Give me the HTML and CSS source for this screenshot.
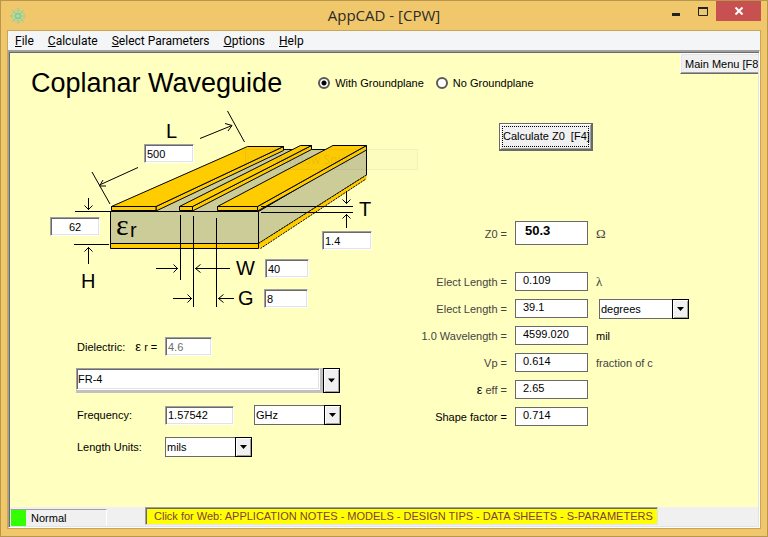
FILE: index.html
```html
<!DOCTYPE html>
<html lang="en">
<head>
<meta charset="utf-8">
<title>AppCAD - [CPW]</title>
<link rel="stylesheet" href="styles.css">
</head>
<body>
<div class="window">
  <header class="titlebar">
    <svg class="logo" width="18" height="18" viewBox="0 0 18 18" aria-hidden="true">
      <g fill="none" stroke="#3fe0cc" stroke-width="1">
        <circle cx="9" cy="9" r="2.5" stroke-width="1.4"/>
        <path d="M9 1v4M9 13v4M1 9h4M13 9h4" stroke-dasharray="1.6 .5"/>
        <path d="M3.5 3.5l3 3M11.500 11.500l3 3M14.500 3.500l-3 3M6.500 11.500l-3 3"/>
        <path d="M6 2l1.200 3M12 2l-1.200 3M6 16l1.200-3M12 16l-1.200-3M2 6l3 1.200M16 6l-3 1.200M2 12l3-1.200M16 12l-3-1.200" stroke-opacity=".35"/>
      </g>
    </svg>
    <div class="title">AppCAD - [CPW]</div>
    <div class="controls">
      <button class="control" aria-label="Minimize"><svg width="10" height="10" viewBox="0 0 10 10"><path d="M1 8.500h8" stroke="#222" stroke-width="3"/></svg></button>
      <button class="control" aria-label="Maximize"><svg width="10" height="10" viewBox="0 0 10 10"><path d="M0 2h10" stroke="#222" stroke-width="2"/><path d="M.5 1v8.500h9V1" fill="none" stroke="#222"/></svg></button>
      <button class="control close" aria-label="Close"><svg width="8" height="8" viewBox="0 0 8 8"><path d="M.5 .5l7 7M7.500 .5l-7 7" stroke="#fff" stroke-width="2"/></svg></button>
    </div>
  </header>
  <div class="client">
    <nav class="menubar">
      <a href="#"><u>F</u>ile</a>
      <a href="#"><u>C</u>alculate</a>
      <a href="#"><u>S</u>elect Parameters</a>
      <a href="#"><u>O</u>ptions</a>
      <a href="#"><u>H</u>elp</a>
    </nav>
    <div class="document">
      <main class="page">
        <div class="page-head">
          <div class="heading">
            <h1>Coplanar Waveguide</h1>
            <div class="radios" role="radiogroup" aria-label="Groundplane">
              <label><input type="radio" name="ground" checked>With Groundplane</label>
              <label><input type="radio" name="ground">No Groundplane</label>
            </div>
          </div>
          <button class="button main-menu">Main Menu [F8</button>
        </div>
        <div class="columns">
          <section class="inputs">
            <div class="diagram">
              <svg width="373" height="210" viewBox="46 105 373 210" aria-hidden="true">
                <g stroke="#000" stroke-width="1" stroke-linejoin="round">
                  <path fill="#cccc99" d="M110.500 211.500L248 149.500H366.500L258.500 211.500Z"/>
                  <path fill="#cccc99" d="M258.500 211.500L366.500 148V175L258.500 243.500Z"/>
                  <path fill="#ffcc00" stroke="none" d="M258.500 243.500L366.500 175V179L260.500 248.500H258.500Z"/>
                  <path fill="none" d="M258.500 243.500L366.500 175M260.500 248.500L366 179" stroke-dasharray="2 1"/>
                  <path fill="#cccc99" d="M110.500 211.500H258.500V243.500H110.500Z"/>
                  <path fill="#ffcc00" d="M110.500 243.500H258.500V248.500H110.500Z"/>
                  <path fill="#ffcc00" d="M156 206.500L283.500 146.500V150.500L156 211Z"/>
                  <path fill="#ffcc00" d="M111.500 206.500L247.500 146.500H283.500L156 206.500Z"/>
                  <path fill="#ffcc00" d="M111.500 206.500H156V210.500H111.500Z"/>
                  <path fill="#ffcc00" d="M192.500 206.500L311.500 145.500V149.500L192.500 211Z"/>
                  <path fill="#ffcc00" d="M179.500 206.500L300.500 145.500H311.500L192.500 206.500Z"/>
                  <path fill="#ffcc00" d="M179.500 206.500H192.500V210.500H179.500Z"/>
                  <path fill="#ffcc00" d="M257.500 206.500L366.500 145.500V150L257.500 211Z"/>
                  <path fill="#ffcc00" d="M217.500 206.500L333 145.500H366.500L257.500 206.500Z"/>
                  <path fill="#ffcc00" d="M217.500 206.500H257.500V210.500H217.500Z"/>
                </g>
                <g fill="none" stroke="#000">
                  <path d="M92 172L110 204M138 167.500L99.500 185M106 186H99.500L103 180"/>
                  <path d="M227.500 111L244.500 142M200 138.500L232 125.500M225 123.500L232 125.500L228 131"/>
                  <path d="M75 211.500H111M88.500 198V210M84.500 205.500L88.500 209.500L92.500 205.500"/>
                  <path d="M74 244.500H109M88.500 264V247M84.500 251.500L88.500 247.500L92.500 251.500"/>
                  <path d="M180.500 215V280M193.500 216V307M216.500 218V307"/>
                  <path d="M156 268.500H178M173.500 264.500L177.500 268.500L173.500 272.500M230 268.500H195M200.500 264.500L195.500 268.500L200.500 272.500"/>
                  <path d="M173 298.500H192M187.500 294.500L191.500 298.500L187.500 302.500M234 298.500H218M223.500 294.500L218.500 298.500L223.500 302.500"/>
                  <path d="M261 206.500H353M261 212.500H353M346.500 191V204M342.500 199.500L346.500 203.500L350.500 199.500M346.500 228V214M342.500 218.500L346.500 214.500L350.500 218.500"/>
                </g>
                <g class="dimension">
                  <text x="166" y="138">L</text>
                  <text x="81" y="288">H</text>
                  <text x="359" y="216">T</text>
                  <text x="236" y="275">W</text>
                  <text x="238" y="305">G</text>
                  <text x="130" y="237">r</text>
                  <text class="epsilon" x="116" y="235">ε</text>
                </g>
                <g opacity=".07">
                  <rect x="245.500" y="149.500" width="172" height="20" fill="#8899bb" fill-opacity=".3" stroke="#446"/>
                  <text class="ghost" x="275" y="164">Window Snip</text>
                </g>
              </svg>
              <input class="field dim-l" aria-label="L" value="500">
              <input class="field dim-h" aria-label="H" value="62">
              <input class="field dim-t" aria-label="T" value="1.4">
              <input class="field dim-w" aria-label="W" value="40">
              <input class="field dim-g" aria-label="G" value="8">
            </div>
            <form class="form">
              <div class="row">
                <label class="name" for="er"><span>Dielectric:</span><span><b class="eps">ε</b> r =</span></label>
                <input class="field short" id="er" value="4.6" disabled>
              </div>
              <div class="row">
                <span class="select material">
                  <select aria-label="Dielectric material"><option>FR-4</option></select>
                  <svg class="drop" viewBox="0 0 7 4"><path d="M0 0h7L3.500 4z"/></svg>
                </span>
              </div>
              <div class="row">
                <label class="name" for="freq">Frequency:</label>
                <input class="field medium" id="freq" value="1.57542">
                <span class="select unit-select freq-unit">
                  <select aria-label="Frequency unit"><option>GHz</option></select>
                  <svg class="drop" viewBox="0 0 7 4"><path d="M0 0h7L3.500 4z"/></svg>
                </span>
              </div>
              <div class="row">
                <label class="name" for="len">Length Units:</label>
                <span class="select unit-select">
                  <select id="len"><option>mils</option></select>
                  <svg class="drop" viewBox="0 0 7 4"><path d="M0 0h7L3.500 4z"/></svg>
                </span>
              </div>
            </form>
          </section>
          <section class="outputs">
            <button class="calculate"><span>Calculate Z0&nbsp; [F4]</span></button>
            <div class="results">
              <label for="z0">Z0 =</label><input class="z0" id="z0" value="50.3" readonly><span class="omega">Ω</span>
              <label for="el1">Elect Length =</label><input id="el1" value="0.109" readonly><span class="lambda">λ</span>
              <label for="el2">Elect Length =</label><input id="el2" value="39.1" readonly>
              <span class="select unit-select angle">
                <select aria-label="Electrical length unit"><option>degrees</option></select>
                <svg class="drop" viewBox="0 0 7 4"><path d="M0 0h7L3.500 4z"/></svg>
              </span>
              <label for="wl">1.0 Wavelength =</label><input id="wl" value="4599.020" readonly><span class="dark">mil</span>
              <label for="vp">Vp =</label><input id="vp" value="0.614" readonly><span>fraction of c</span>
              <label for="eff"><b class="eps">ε</b> eff =</label><input id="eff" value="2.65" readonly><span></span>
              <label class="dark" for="sf">Shape factor =</label><input id="sf" value="0.714" readonly><span></span>
            </div>
          </section>
        </div>
      </main>
      <footer class="statusbar">
        <div class="status"><i class="lamp"></i>Normal</div>
        <a class="weblink" href="#">Click for Web: APPLICATION NOTES - MODELS - DESIGN TIPS - DATA SHEETS - S-PARAMETERS</a>
      </footer>
    </div>
  </div>
</div>
</body>
</html>
```
FILE: styles.css
```css
* { box-sizing: border-box; }

body {
  margin: 0;
  font: 11px/14px "Liberation Sans", Arial, sans-serif;
  color: #000;
}

button, input, select { font: inherit; color: inherit; margin: 0; }

.window {
  display: flex;
  flex-direction: column;
  min-height: 100vh;
  padding: 0 6px 7px;
  background: #f0c76a;
  border: 1px solid #b8964d;
}

/* Title bar */
.titlebar {
  display: grid;
  grid-template-columns: 1fr auto 1fr;
  height: 29px;
}
.logo { margin: 6px 0 0 2px; }
.title {
  font: 15px/29px "Open Sans", "Noto Sans", sans-serif;
  color: #2a2a2a;
}
.controls { display: flex; justify-content: flex-end; align-items: flex-start; }
.control {
  display: flex;
  align-items: center;
  justify-content: center;
  width: 27px;
  height: 20px;
  padding: 0;
  border: 0;
  background: none;
}
.close { width: 45px; background: #c75050; }

.client {
  flex: 1;
  display: flex;
  flex-direction: column;
  border: 1px solid #c9a55a;
  background: #f4f5f7;
}

.menubar {
  display: flex;
  gap: 14px;
  height: 19px;
  padding-left: 7px;
  font: 12px/20px Roboto, "Open Sans", sans-serif;
}
.menubar a { color: #000; text-decoration: none; }

/* Sunken document area */
.document {
  flex: 1;
  display: flex;
  flex-direction: column;
  border: 1px solid;
  border-color: #a0a0a0 #fff #fff #a0a0a0;
  border-top-width: 2px;
  box-shadow: inset 1px 1px #696969, inset -1px -1px #e3e3e3;
  padding: 1px;
}

.page { flex: 1; background: #ffffc0; }

.page-head { display: flex; justify-content: space-between; height: 52px; }
.heading { display: flex; align-items: center; gap: 36px; padding-left: 21px; padding-top: 8px; }
h1 { margin: 0; font-size: 27px; line-height: 32px; font-weight: 400; }

.radios { display: flex; gap: 12px; }
.radios label { display: flex; align-items: center; gap: 5px; }
.radios input {
  appearance: none;
  width: 12px;
  height: 12px;
  border: 2px solid #5a5a5a;
  border-radius: 50%;
  background: #fff;
}
.radios input:checked { background: radial-gradient(circle, #000 0 2px, #fff 3px); }

.main-menu {
  width: 78px;
  height: 21px;
  padding: 0 0 0 4px;
  border: 1px solid #fff;
  border-right: 0;
  border-bottom: 1px solid #696969;
  box-shadow: inset 0 -1px #a0a0a0, inset 1px 1px #e3e3e3;
  background: #f0f0f0;
  text-align: left;
  white-space: nowrap;
  overflow: hidden;
}

.columns { display: grid; grid-template-columns: 41fr 34fr; }

/* Sunken text box */
.field {
  height: 19px;
  padding: 0 2px;
  border: 1px solid;
  border-color: #a0a0a0 #fff #fff #a0a0a0;
  border-radius: 0;
  box-shadow: inset 1px 1px #696969, inset -1px -1px #e3e3e3;
  background: #fff;
}
.field:disabled { color: #6d6d6d; }

/* Cross-section drawing with its dimension boxes */
.diagram { position: relative; height: 210px; margin-left: 36px; }
.diagram svg { display: block; }
.diagram .field { position: absolute; width: 50px; }
.diagram .dim-l { left: 98px; top: 39px; }
.diagram .dim-h { left: 4px; top: 112px; text-align: center; }
.diagram .dim-t { left: 276px; top: 126px; }
.diagram .dim-w { left: 219px; top: 154px; width: 44px; }
.diagram .dim-g { left: 218px; top: 184px; width: 44px; }
.dimension { font-size: 20px; }
.epsilon { font: 30px "Liberation Serif", serif; }
.ghost { font: 12px "Open Sans", sans-serif; }

/* Material and frequency form */
.form {
  display: flex;
  flex-direction: column;
  gap: 12px;
  padding: 22px 0 0 66px;
}
.row { display: flex; align-items: center; }
.name { display: flex; gap: 10px; width: 89px; padding-left: 1px; }
.eps { font-size: 13px; font-weight: 400; }
.short { width: 47px; }
.medium { width: 69px; }

.select { position: relative; display: block; }
.select select {
  appearance: none;
  display: block;
  width: 100%;
  height: 20px;
  padding: 0 18px 0 1px;
  border: 1px solid #696969;
  border-radius: 0;
  background: #fff;
}
.drop {
  position: absolute;
  top: 0;
  right: 0;
  width: 17px;
  height: 100%;
  padding: 0 4px;
  border: 1px solid #000;
  background: #f0f0f0;
  box-shadow: inset 1px 1px #fff, inset -1px -1px #a0a0a0;
  pointer-events: none;
}
.unit-select { width: 87px; }
.freq-unit { margin-left: 20px; }
.material {
  width: 264px;
  padding: 0 20px 3px 0;
  background: linear-gradient(#c0c0c0, #c0c0c0);
}
.material select {
  height: 22px;
  border-color: #a0a0a0 #fff #fff #a0a0a0;
  box-shadow: inset 1px 1px #696969, inset -1px -1px #e3e3e3;
}

/* Results */
.outputs { padding-top: 18px; }
.calculate {
  display: block;
  width: 94px;
  height: 28px;
  margin-left: 80px;
  padding: 2px;
  border: 1px solid #696969;
  border-right-width: 2px;
  border-bottom-width: 2px;
  box-shadow: inset 1px 1px #fff, inset -1px -1px #a0a0a0;
  background: #f0f0f0;
}
.calculate span {
  display: block;
  border: 1px dotted #000;
  line-height: 19px;
  white-space: nowrap;
}

.results {
  display: grid;
  grid-template-columns: 88px 73px auto;
  align-items: center;
  gap: 8px;
  margin-top: 70px;
  color: #444;
}
.results label { text-align: right; white-space: nowrap; }
.results input {
  width: 73px;
  height: 19px;
  padding: 0 0 3px 7px;
  border: 1px solid #696969;
  border-radius: 0;
  background: #fff;
  color: #000;
}
.results .z0 { height: 24px; margin-bottom: 19px; padding: 0 0 5px 9px; font-size: 13px; font-weight: 700; }
.results .z0, .results label[for="z0"], .omega { align-self: start; }
.results label[for="z0"], .omega { line-height: 26px; }
.lambda, .omega { font-family: "Liberation Serif", serif; font-size: 13px; }
.results .dark, .results select, .results .eps { color: #000; }
.results .angle { width: 90px; margin: -1px 0 0 3px; }
.results .angle select, .results .angle { height: 20px; margin-bottom: -1px; }

/* Status bar */
.statusbar {
  display: flex;
  height: 19px;
  background: #f0f0f0;
}
.status {
  display: flex;
  align-items: center;
  gap: 5px;
  width: 97px;
  height: 17px;
  margin-top: 2px;
  border: 1px solid;
  border-color: #a0a0a0 #fff #f0f0f0 #f0f0f0;
}
.lamp { width: 15px; height: 16px; background: #33ff00; }
.weblink {
  height: 18px;
  margin-left: 38px;
  padding: 0 4px 0 8px;
  border: 1px solid;
  border-color: #a0a0a0 #e3e3e3 #e3e3e3 #a0a0a0;
  box-shadow: inset 1px 1px #696969;
  background: #ff0;
  color: #804040;
  line-height: 17px;
  text-decoration: none;
}
```
